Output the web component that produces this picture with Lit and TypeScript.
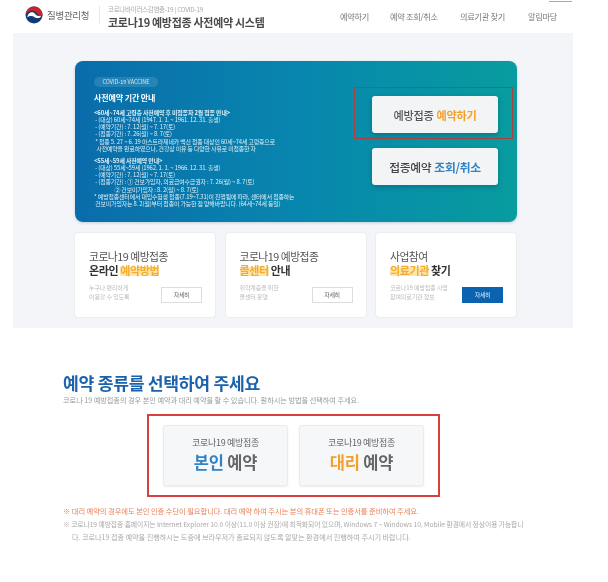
import { LitElement, html, css } from "lit";
import { customElement } from "lit/decorators.js";

@customElement("app-root")
export class AppRoot extends LitElement {
  static styles = css`
    :host { display: block; width: 608px; height: 582px; background: #fff; overflow: hidden;
      font-family: "Noto Sans CJK KR", "Noto Sans", sans-serif; color: #333; letter-spacing: -0.3px; }
    .root { filter: blur(0.45px); }
    .header { height: 33px; display: flex; align-items: flex-start; position: relative; }
    .topline { position: absolute; left: 549px; top: 1px; width: 23px; height: 1px; background: #aaa; }
    .logo { margin: 6px 0 0 25px; width: 18px; height: 18px; flex: none; }
    .org { margin: 7px 0 0 4px; width: 52px; font-size: 9.5px; line-height: 16px; font-weight: 400; color: #666; white-space: nowrap; }
    .vdiv { width: 1px; height: 18px; margin-top: 6px; background: #e8e8e8; flex: none; }
    .titles { margin: 5px 0 0 8px; width: 232px; flex: none; }
    .small { font-size: 6.5px; line-height: 8px; color: #aaa; white-space: nowrap; }
    .title { font-size: 11px; line-height: 14px; margin-top: 2px; font-weight: 700; color: #4a4a4a; white-space: nowrap; }
    .nav { display: flex; gap: 20px; font-size: 8.2px; line-height: 10px; color: #777; margin-top: 11px; white-space: nowrap; }
    .nav span:nth-child(1) { width: 30px; }
    .nav span:nth-child(2) { width: 50px; }
    .nav span:nth-child(3) { width: 48px; }

    .panel { margin-left: 13px; width: 560px; height: 295px; background: #f3f5f8; padding: 28px 0 0 62px; box-sizing: border-box; }
    .banner { width: 442px; height: 161px; border-radius: 8px; box-sizing: border-box; padding: 16px 0 0 19px; display: flex;
      background: linear-gradient(90deg, #0a6cab 0%, #0886ae 50%, #089c9f 100%); box-shadow: 0 1px 3px rgba(0,60,90,.2); }
    .info { width: 260px; flex: none; color: #dff1f8; font-size: 5.9px; line-height: 7.15px; white-space: nowrap; letter-spacing: -0.12px; }
    .badge { display: inline-block; height: 10px; line-height: 10px; width: 64px; border-radius: 5px; background: rgba(255,255,255,.12); text-align: center; font-size: 5.5px; color: #cfe8f2; letter-spacing: 0; vertical-align: top; }
    .info h3 { margin: 5px 0 6px; font-size: 8px; line-height: 11px; font-weight: 700; color: #fff; }
    .info b { font-weight: 700; }
    .gap { height: 5px; }
    .actions { display: flex; flex-direction: column; margin: 10px 0 0 0; position: relative; }
    .hl { position: absolute; left: 0; top: 0; width: 159px; height: 52px; border: 1px solid #a8403f; box-sizing: border-box; }
    .big { margin-left: 18px; width: 126px; height: 37px; border-radius: 3px; background: #f3f4f5; display: flex; align-items: center; justify-content: center;
      font-size: 11.2px; font-weight: 500; color: #555; box-shadow: 0 2px 5px rgba(0,50,70,.3); white-space: nowrap; }
    .big b { font-weight: 700; margin-left: 3px; }
    .big.a { margin-top: 9px; }
    .big.b { margin-top: 15px; color: #444; font-size: 11.8px; }
    .orange { color: #f3a02c; }
    .blue { color: #2f83c6; }

    .cards { display: flex; gap: 10.5px; margin-top: 11px; }
    .card { width: 140px; height: 84px; background: #fff; border-radius: 3px; box-sizing: border-box; padding: 17px 0 0 14px; box-shadow: 0 0 2px rgba(0,0,0,.12); position: relative; }
    .card .l1 { font-size: 10.8px; line-height: 13px; color: #555; white-space: nowrap; letter-spacing: -0.5px; }
    .card .l2 { font-size: 11px; line-height: 14px; font-weight: 700; color: #333; white-space: nowrap; letter-spacing: -0.4px; }
    .mark { color: #f6ad2e; background: linear-gradient(transparent 30%, #fde6b0 30%, #fde6b0 90%, transparent 90%); }
    .desc { margin-top: 7px; font-size: 6px; line-height: 8.5px; color: #bbb; white-space: nowrap; letter-spacing: -0.1px; }
    .more { position: absolute; right: 13px; bottom: 14px; width: 41px; height: 16px; border: 1px solid #ddd; box-sizing: border-box; background: #fff; font-size: 6px; line-height: 14px; text-align: center; color: #666; }
    .more.on { background: #0b63b0; border-color: #0b63b0; color: #dfeaf6; }

    .sec { padding: 44px 0 0 63px; }
    h2 { margin: 0; font-size: 17.2px; line-height: 22px; font-weight: 700; color: #1b62ad; white-space: nowrap; letter-spacing: -0.3px; }
    .sub { font-size: 7.2px; line-height: 9px; margin-top: 2px; color: #999; white-space: nowrap; letter-spacing: -0.05px; }
    .pick { margin: 9px 0 0 84px; width: 293px; height: 83px; box-sizing: border-box; border: 2px solid #d8403f; padding: 9px 0 0 14px; display: flex; gap: 11px; }
    .opt { width: 125px; height: 61px; box-sizing: border-box; background: #f6f7f9; border: 1px solid #e9ebee; border-radius: 3px; box-shadow: 0 1px 2px rgba(0,0,0,.08); text-align: center; padding-top: 11px; }
    .opt .s { font-size: 9px; line-height: 11px; color: #666; white-space: nowrap; }
    .opt .t { font-size: 16.5px; line-height: 22px; margin-top: 3px; font-weight: 700; color: #666; white-space: nowrap; letter-spacing: -0.2px; }
    .notes { margin-top: 8px; font-size: 6.8px; line-height: 13px; color: #aaa; white-space: nowrap; letter-spacing: -0.08px; }
    .notes .o { color: #e8825a; font-size: 7.3px; }
    .notes .in { padding-left: 9px; font-size: 7.2px; }
  `;

  render() {
    return html`<div class="root">
      <div class="header">
        <div class="topline"></div>
        <svg class="logo" viewBox="0 0 18 18">
          <circle cx="9" cy="9" r="8.5" fill="#123a74"/>
          <path d="M1 6.2 A8.5 8.5 0 0 1 17.4 10.4 L13.5 9.5 C12 5 7 3.5 3.5 6 L1 8Z" fill="#c8242f"/>
          <path d="M2.4 11.5 C2.6 6.5 8 4.8 10.2 8 C11.4 9.8 13.6 10.4 16.4 10.2 C15 12.2 12 12.6 10 11.4 C7.5 9.6 4.5 9.4 2.4 11.5Z" fill="#fff"/>
        </svg>
        <div class="org">질병관리청</div>
        <div class="vdiv"></div>
        <div class="titles">
          <div class="small">코로나바이러스감염증-19 | COVID-19</div>
          <div class="title">코로나19 예방접종 사전예약 시스템</div>
        </div>
        <div class="nav"><span>예약하기</span><span>예약 조회/취소</span><span>의료기관 찾기</span><span>알림마당</span></div>
      </div>
      <div class="panel">
        <div class="banner">
          <div class="info">
            <span class="badge">COVID-19 VACCINE</span>
            <h3>사전예약 기간 안내</h3>
            <div><b>&lt;60세~74세 고령층 사전예약 후 미접종자 2월 접종 안내&gt;</b></div>
            <div>&nbsp;- (대상) 60세~74세 (1947. 1. 1. ~ 1961. 12. 31. 출생)</div>
            <div>&nbsp;- (예약기간) : 7. 12(월) ~ 7. 17(토)</div>
            <div>&nbsp;- (접종기간) : 7. 26(월) ~ 8. 7(토)</div>
            <div>&nbsp;* 접종 5. 27 ~ 6. 19 아스트라제네카 백신 접종 대상인 60세~74세 고령층으로</div>
            <div>&nbsp;&nbsp;사전예약을 완료하였으나, 건강상 이유 등 다양한 사유로 미접종한 자</div>
            <div class="gap"></div>
            <div><b>&lt;55세~59세 사전예약 안내&gt;</b></div>
            <div>&nbsp;- (대상) 55세~59세 (1962. 1. 1. ~ 1966. 12. 31. 출생)</div>
            <div>&nbsp;- (예약기간) : 7. 12(월) ~ 7. 17(토)</div>
            <div>&nbsp;- (접종기간) : ① 건보가입자, 의료급여수급권자 : 7. 26(월) ~ 8. 7(토)</div>
            <div>&nbsp;&nbsp;&nbsp;&nbsp;&nbsp;&nbsp;&nbsp;&nbsp;&nbsp;&nbsp;&nbsp;&nbsp;&nbsp;&nbsp;&nbsp;&nbsp;&nbsp;② 건보미가입자 : 8. 2(월) ~ 8. 7(토)</div>
            <div>* 예방접종센터에서 대입수험생 접종(7.19~7.31)이 진행됨에 따라, 센터에서 접종하는</div>
            <div>&nbsp;건보미가입자는 8. 2(월)부터 접종이 가능한 점 양해바랍니다. (64세~74세 동일)</div>
          </div>
          <div class="actions">
            <div class="hl"></div>
            <div class="big a">예방접종<b class="orange">예약하기</b></div>
            <div class="big b">접종예약<b class="blue">조회/취소</b></div>
          </div>
        </div>
        <div class="cards">
          <div class="card">
            <div class="l1">코로나19 예방접종</div>
            <div class="l2">온라인 <span class="mark">예약방법</span></div>
            <div class="desc">누구나 편리하게<br>이용할 수 있도록</div>
            <div class="more">자세히</div>
          </div>
          <div class="card">
            <div class="l1">코로나19 예방접종</div>
            <div class="l2"><span class="mark">콜센터</span> 안내</div>
            <div class="desc">취약계층을 위한<br>콜센터 운영</div>
            <div class="more">자세히</div>
          </div>
          <div class="card">
            <div class="l1">사업참여</div>
            <div class="l2"><span class="mark">의료기관</span> 찾기</div>
            <div class="desc">코로나19 예방접종 사업<br>참여의료기관 정보</div>
            <div class="more on">자세히</div>
          </div>
        </div>
      </div>
      <div class="sec">
        <h2>예약 종류를 선택하여 주세요</h2>
        <div class="sub">코로나 19 예방접종의 경우 본인 예약과 대리 예약을 할 수 있습니다. 원하시는 방법을 선택하여 주세요.</div>
        <div class="pick">
          <div class="opt"><div class="s">코로나19 예방접종</div><div class="t"><span class="blue">본인</span> 예약</div></div>
          <div class="opt"><div class="s">코로나19 예방접종</div><div class="t"><span class="orange">대리</span> 예약</div></div>
        </div>
        <div class="notes">
          <div class="o">※ 대리 예약의 경우에도 본인 인증 수단이 필요합니다. 대리 예약 하여 주시는 분의 휴대폰 또는 인증서를 준비하여 주세요.</div>
          <div>※ 코로나19 예방접종 홈페이지는 Internet Explorer 10.0 이상(11.0 이상 권장)에 최적화되어 있으며, Windows 7 ~ Windows 10, Mobile 환경에서 정상이용 가능합니</div>
          <div class="in">다. 코로나19 접종 예약을 진행하시는 도중에 브라우저가 종료되지 않도록 알맞는 환경에서 진행하여 주시기 바랍니다.</div>
        </div>
      </div>
    </div>`;
  }
}
